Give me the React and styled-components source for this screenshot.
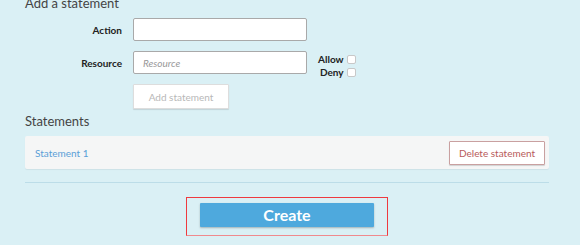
import React from "react";
import styled, { createGlobalStyle } from "styled-components";

const Global = createGlobalStyle`
  html, body { margin: 0; padding: 0; }
  body {
    background: #daf0f5;
    font-family: Lato, "Open Sans", "Liberation Sans", sans-serif;
    color: #333;
  }
`;

const Page = styled.div`
  width: 524px;
  padding: 0 31px 0 25px;
  overflow: hidden;
  height: 245px;
`;

const Heading = styled.h3`
  margin: ${(p) => p.$mt || "0"} 0 0 0;
  font-size: 13px;
  line-height: 16px;
  font-weight: 400;
  color: #444;
`;

const FormGrid = styled.div`
  display: grid;
  grid-template-columns: 97px 174px auto;
  column-gap: 11px;
  row-gap: 10px;
  margin-top: 7px;
  align-items: center;
`;

const Label = styled.label`
  text-align: right;
  font-size: 10px;
  font-weight: 700;
  color: #222;
`;

const Input = styled.input`
  box-sizing: border-box;
  width: 174px;
  height: 23px;
  border: 1px solid #a9a9a9;
  border-radius: 2px;
  background: #fff;
  padding: 0 9px;
  font-family: inherit;
  font-size: 10px;
  outline: none;
  &::placeholder {
    color: #999;
    font-style: italic;
  }
`;

const Choices = styled.div`
  display: flex;
  flex-direction: column;
  align-items: flex-end;
  align-self: end;
  justify-self: start;
  gap: 2px;
  margin-bottom: -4px;
`;

const Choice = styled.label`
  display: flex;
  align-items: center;
  gap: 3px;
  font-size: 10px;
  font-weight: 700;
  color: #222;
  line-height: 11px;
`;

const Box = styled.span`
  display: inline-block;
  width: 7px;
  height: 7px;
  border: 1px solid #c8c8c8;
  border-radius: 2px;
  background: #fff;
`;

const GhostButton = styled.button`
  grid-column: 2;
  justify-self: start;
  box-sizing: border-box;
  width: 96px;
  height: 25px;
  background: #fff;
  border: 1px solid #ddd;
  border-radius: 1px;
  box-shadow: 0 1px 1px rgba(0, 0, 0, 0.12);
  font-family: inherit;
  font-size: 10px;
  color: #b8b8b8;
  padding: 0;
`;

const Card = styled.div`
  margin-top: 7px;
  height: 33px;
  box-sizing: border-box;
  background: #f5f6f6;
  border-radius: 2px;
  box-shadow: 0 1px 1px rgba(0, 0, 0, 0.06);
  display: flex;
  align-items: center;
  justify-content: space-between;
  padding: 0 4px 0 10px;
`;

const LinkText = styled.a`
  font-size: 10px;
  color: #5b9fd6;
  text-decoration: none;
`;

const DangerButton = styled.button`
  box-sizing: border-box;
  width: 96px;
  height: 24px;
  background: #fff;
  border: 1px solid #c9a0a0;
  border-radius: 1px;
  box-shadow: 0 1px 1px rgba(0, 0, 0, 0.15);
  font-family: inherit;
  font-size: 10px;
  color: #b85a5a;
  padding: 0;
`;

const Rule = styled.hr`
  margin: 13px 0 0 0;
  border: 0;
  border-top: 1px solid #bcdde8;
`;

const Footer = styled.div`
  display: flex;
  justify-content: center;
  margin-top: 14px;
`;

const Frame = styled.div`
  box-sizing: border-box;
  width: 202px;
  height: 39px;
  border: 1px solid #ee3a3f;
  border-bottom-color: #f08a8e;
  padding: 5px 0 0 13px;
`;

const PrimaryButton = styled.button`
  box-sizing: border-box;
  width: 174px;
  height: 24px;
  background: #4ea9dd;
  border: 0;
  border-radius: 1px;
  box-shadow: 0 1px 2px rgba(0, 0, 0, 0.25);
  color: #fff;
  font-family: inherit;
  font-weight: 700;
  font-size: 16px;
  line-height: 24px;
  padding: 0;
`;

export default function App() {
  return (
    <>
      <Global />
      <Page>
        <Heading $mt="-5px">Add a statement</Heading>
        <FormGrid>
          <Label>Action</Label>
          <Input />
          <span />
          <Label>Resource</Label>
          <Input placeholder="Resource" />
          <Choices>
            <Choice>
              Allow <Box />
            </Choice>
            <Choice>
              Deny <Box />
            </Choice>
          </Choices>
          <GhostButton>Add statement</GhostButton>
        </FormGrid>
        <Heading $mt="4px">Statements</Heading>
        <Card>
          <LinkText href="#">Statement 1</LinkText>
          <DangerButton>Delete statement</DangerButton>
        </Card>
        <Rule />
        <Footer>
          <Frame>
            <PrimaryButton>Create</PrimaryButton>
          </Frame>
        </Footer>
      </Page>
    </>
  );
}
